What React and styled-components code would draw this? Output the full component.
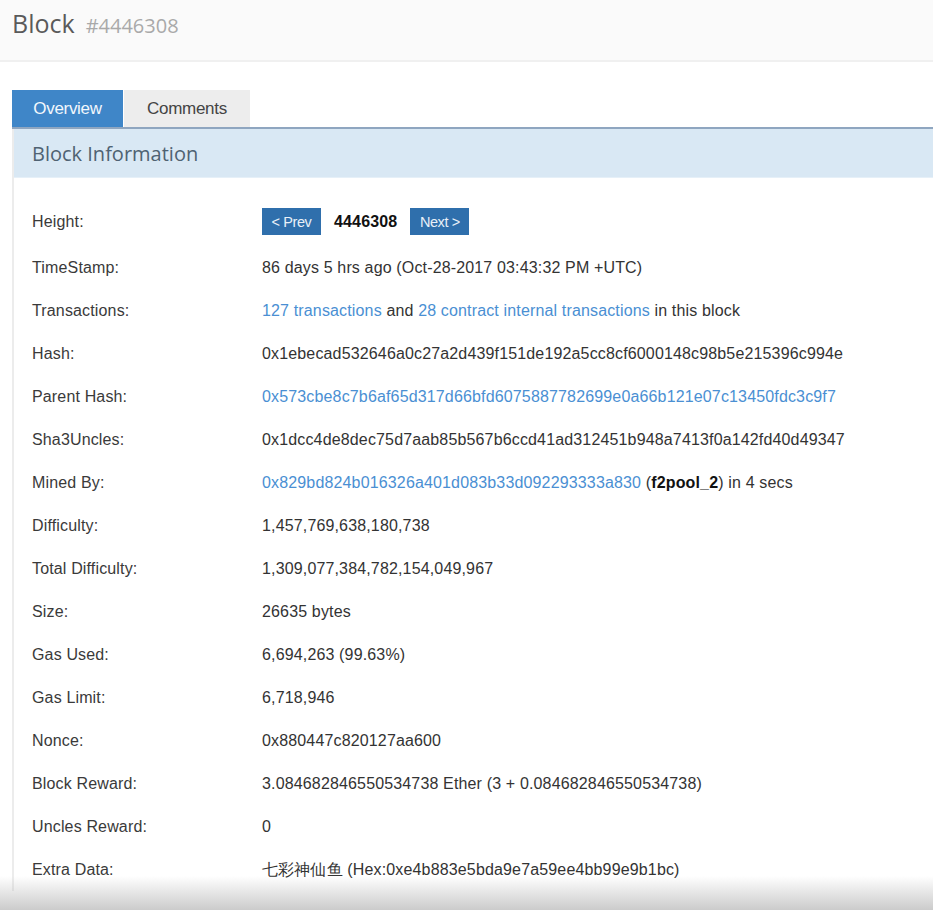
import React from "react";
import styled, { createGlobalStyle } from "styled-components";

const GlobalStyle = createGlobalStyle`
  html, body {
    margin: 0;
    padding: 0;
    background: #fff;
    overflow: hidden;
  }
  body {
    font-family: "Liberation Sans", Arial, sans-serif;
    color: #333;
  }
`;

const Header = styled.div`
  height: 62px;
  background: #fafafa;
  border-bottom: 2px solid #f0f0f0;
  display: flex;
  align-items: baseline;
  padding: 6px 0 0 12px;
  box-sizing: border-box;
`;

const Title = styled.h1`
  margin: 0;
  font-family: "Open Sans", sans-serif;
  font-weight: 400;
  font-size: 25px;
  color: #5a5a5a;
`;

const SubTitle = styled.span`
  margin-left: 11px;
  font-family: "Open Sans", sans-serif;
  font-size: 20px;
  color: #a9a9a9;
`;

const Main = styled.div`
  padding: 28px 0 0 12px;
`;

const Tabs = styled.div`
  display: flex;
  border-bottom: 2px solid #8fa6c0;
`;

const Tab = styled.div`
  height: 37px;
  display: flex;
  align-items: center;
  justify-content: center;
  width: ${(p) => (p.$active ? "111px" : "126px")};
  font-size: 17px;
  letter-spacing: -0.3px;
  background: ${(p) => (p.$active ? "#3f86c8" : "#ededed")};
  color: ${(p) => (p.$active ? "#f2f7fc" : "#444")};
  margin-right: 1px;
`;

const Panel = styled.div`
  border-left: 2px solid #ececec;
  margin-right: -20px;
`;

const PanelHeading = styled.div`
  height: 49px;
  background: #d9e8f4;
  border-bottom: 1px solid #e6f0f8;
  display: flex;
  align-items: center;
  padding-left: 18px;
  font-family: "Open Sans", sans-serif;
  font-size: 20px;
  color: #4f6272;
  box-sizing: border-box;
`;

const PanelBody = styled.div`
  padding: 19px 0 0 18px;
`;

const Row = styled.div`
  display: grid;
  grid-template-columns: 230px 1fr;
  align-items: center;
  min-height: ${(p) => (p.$tall ? "49px" : "43px")};
  font-size: 16px;
  line-height: 20px;
  letter-spacing: 0.15px;
`;

const Label = styled.div`
  color: #3a3a3a;
`;

const Value = styled.div`
  display: flex;
  align-items: center;
  white-space: pre;
  color: #333;

  b {
    color: #111;
  }
`;

const Link = styled.span`
  color: #4a8fd3;
`;

const NavButton = styled.span`
  display: inline-flex;
  align-items: center;
  justify-content: center;
  height: 27px;
  width: 59px;
  background: #2f6fac;
  color: #e8f0f8;
  font-size: 14.5px;
  letter-spacing: -0.4px;
`;

const Height = styled.b`
  margin: 0 13px;
  font-size: 16px;
  color: #111;
`;

const BottomShade = styled.div`
  position: fixed;
  left: 0;
  right: 0;
  bottom: 0;
  height: 34px;
  pointer-events: none;
  background: linear-gradient(to bottom, rgba(200, 200, 200, 0), rgba(190, 190, 190, 0.8));
`;

const rows = [
  { label: "TimeStamp:", value: "86 days 5 hrs ago (Oct-28-2017 03:43:32 PM +UTC)" },
  {
    label: "Transactions:",
    value: (
      <span>
        <Link>127 transactions</Link> and <Link>28 contract internal transactions</Link> in this block
      </span>
    ),
  },
  { label: "Hash:", value: "0x1ebecad532646a0c27a2d439f151de192a5cc8cf6000148c98b5e215396c994e" },
  {
    label: "Parent Hash:",
    value: <Link>0x573cbe8c7b6af65d317d66bfd6075887782699e0a66b121e07c13450fdc3c9f7</Link>,
  },
  { label: "Sha3Uncles:", value: "0x1dcc4de8dec75d7aab85b567b6ccd41ad312451b948a7413f0a142fd40d49347" },
  {
    label: "Mined By:",
    value: (
      <span>
        <Link>0x829bd824b016326a401d083b33d092293333a830</Link> (<b>f2pool_2</b>) in 4 secs
      </span>
    ),
  },
  { label: "Difficulty:", value: "1,457,769,638,180,738" },
  { label: "Total Difficulty:", value: "1,309,077,384,782,154,049,967" },
  { label: "Size:", value: "26635 bytes" },
  { label: "Gas Used:", value: "6,694,263 (99.63%)" },
  { label: "Gas Limit:", value: "6,718,946" },
  { label: "Nonce:", value: "0x880447c820127aa600" },
  { label: "Block Reward:", value: "3.084682846550534738 Ether (3 + 0.084682846550534738)" },
  { label: "Uncles Reward:", value: "0" },
  { label: "Extra Data:", value: "七彩神仙鱼 (Hex:0xe4b883e5bda9e7a59ee4bb99e9b1bc)" },
];

export default function App() {
  return (
    <>
      <GlobalStyle />
      <Header>
        <Title>Block</Title>
        <SubTitle>#4446308</SubTitle>
      </Header>
      <Main>
        <Tabs>
          <Tab $active>Overview</Tab>
          <Tab>Comments</Tab>
        </Tabs>
        <Panel>
          <PanelHeading>Block Information</PanelHeading>
          <PanelBody>
            <Row $tall>
              <Label>Height:</Label>
              <Value>
                <NavButton>&lt; Prev</NavButton>
                <Height>4446308</Height>
                <NavButton>Next &gt;</NavButton>
              </Value>
            </Row>
            {rows.map((r) => (
              <Row key={r.label}>
                <Label>{r.label}</Label>
                <Value>{r.value}</Value>
              </Row>
            ))}
          </PanelBody>
        </Panel>
      </Main>
      <BottomShade />
    </>
  );
}
